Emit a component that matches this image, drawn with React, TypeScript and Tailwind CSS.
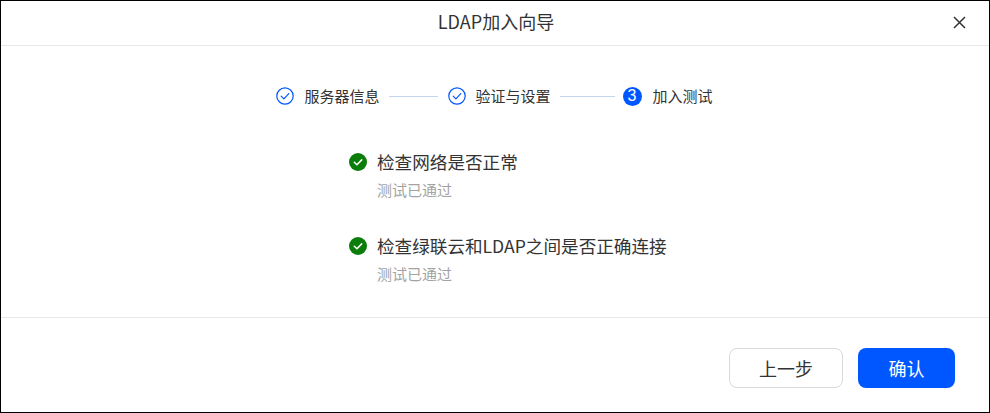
import React from 'react';

const CheckOutline: React.FC = () => (
  <svg width="18" height="18" viewBox="0 0 18 18" fill="none" className="shrink-0">
    <circle cx="9" cy="9" r="8.2" stroke="#0057ff" strokeWidth="1.2" />
    <path d="M5.2 9.2l2.7 2.7 4.9-5.2" stroke="#0057ff" strokeWidth="1.2" strokeLinecap="round" strokeLinejoin="round" />
  </svg>
);

const CheckFilled: React.FC = () => (
  <svg width="18" height="18" viewBox="0 0 18 18" fill="none" className="shrink-0">
    <circle cx="9" cy="9" r="9" fill="#0a7d0a" />
    <path d="M5.3 9.2l2.6 2.5 4.8-4.8" stroke="#fff" strokeWidth="1.5" strokeLinecap="round" strokeLinejoin="round" />
  </svg>
);

const checks = ['检查网络是否正常', '检查绿联云和LDAP之间是否正确连接'];

export default function App() {
  return (
    <div className="w-[990px] h-[413px] flex flex-col bg-white border border-black text-[#333] font-['Noto_Sans_CJK_SC','Liberation_Sans',sans-serif]">
      <div className="h-[45px] shrink-0 relative flex items-center justify-center border-b border-[#e8e8e8] text-[18px] pb-[4px] pl-[2px]">
        LDAP加入向导
        <button className="absolute right-[22px] top-[14px] text-[#333]">
          <svg width="15" height="15" viewBox="0 0 15 15" fill="none">
            <path d="M2 2l11 11M13 2L2 13" stroke="#333" strokeWidth="1.5" />
          </svg>
        </button>
      </div>

      <div className="flex-1 flex flex-col">
        <div className="flex items-center justify-center mt-[40px] h-[20px] text-[15px] ml-[-1px]">
          <CheckOutline />
          <span className="ml-[10px]">服务器信息</span>
          <div className="w-[49px] h-px bg-[#c5d5ef] mx-[10px]" />
          <CheckOutline />
          <span className="ml-[9px]">验证与设置</span>
          <div className="w-[55px] h-px bg-[#c5d5ef] ml-[9px] mr-[8px]" />
          <div className="w-[19px] h-[19px] rounded-full bg-[#0057ff] text-white flex items-center justify-center text-[16px] font-['Liberation_Sans',sans-serif]">3</div>
          <span className="ml-[11px]">加入测试</span>
        </div>

        <div className="ml-[348px] mt-[43px] flex flex-col gap-[32px]">
          {checks.map(label => (
            <div key={label}>
              <div className="flex items-center h-[26px] gap-[10px] text-[17.6px]">
                <CheckFilled />
                <span>{label}</span>
              </div>
              <div className="ml-[28px] mt-[4px] h-[22px] leading-[22px] text-[15px] text-[#a3a3a3]">测试已通过</div>
            </div>
          ))}
        </div>
      </div>

      <div className="h-[95px] shrink-0 border-t border-[#e8e8e8] flex justify-end gap-[15px] pt-[30px] pr-[34px]">
        <button className="w-[114px] h-[40px] rounded-[8px] border border-[#d9d9d9] bg-white text-[18px] text-[#333]">上一步</button>
        <button className="w-[97px] h-[40px] rounded-[8px] bg-[#0057ff] text-[18px] text-white">确认</button>
      </div>
    </div>
  );
}
